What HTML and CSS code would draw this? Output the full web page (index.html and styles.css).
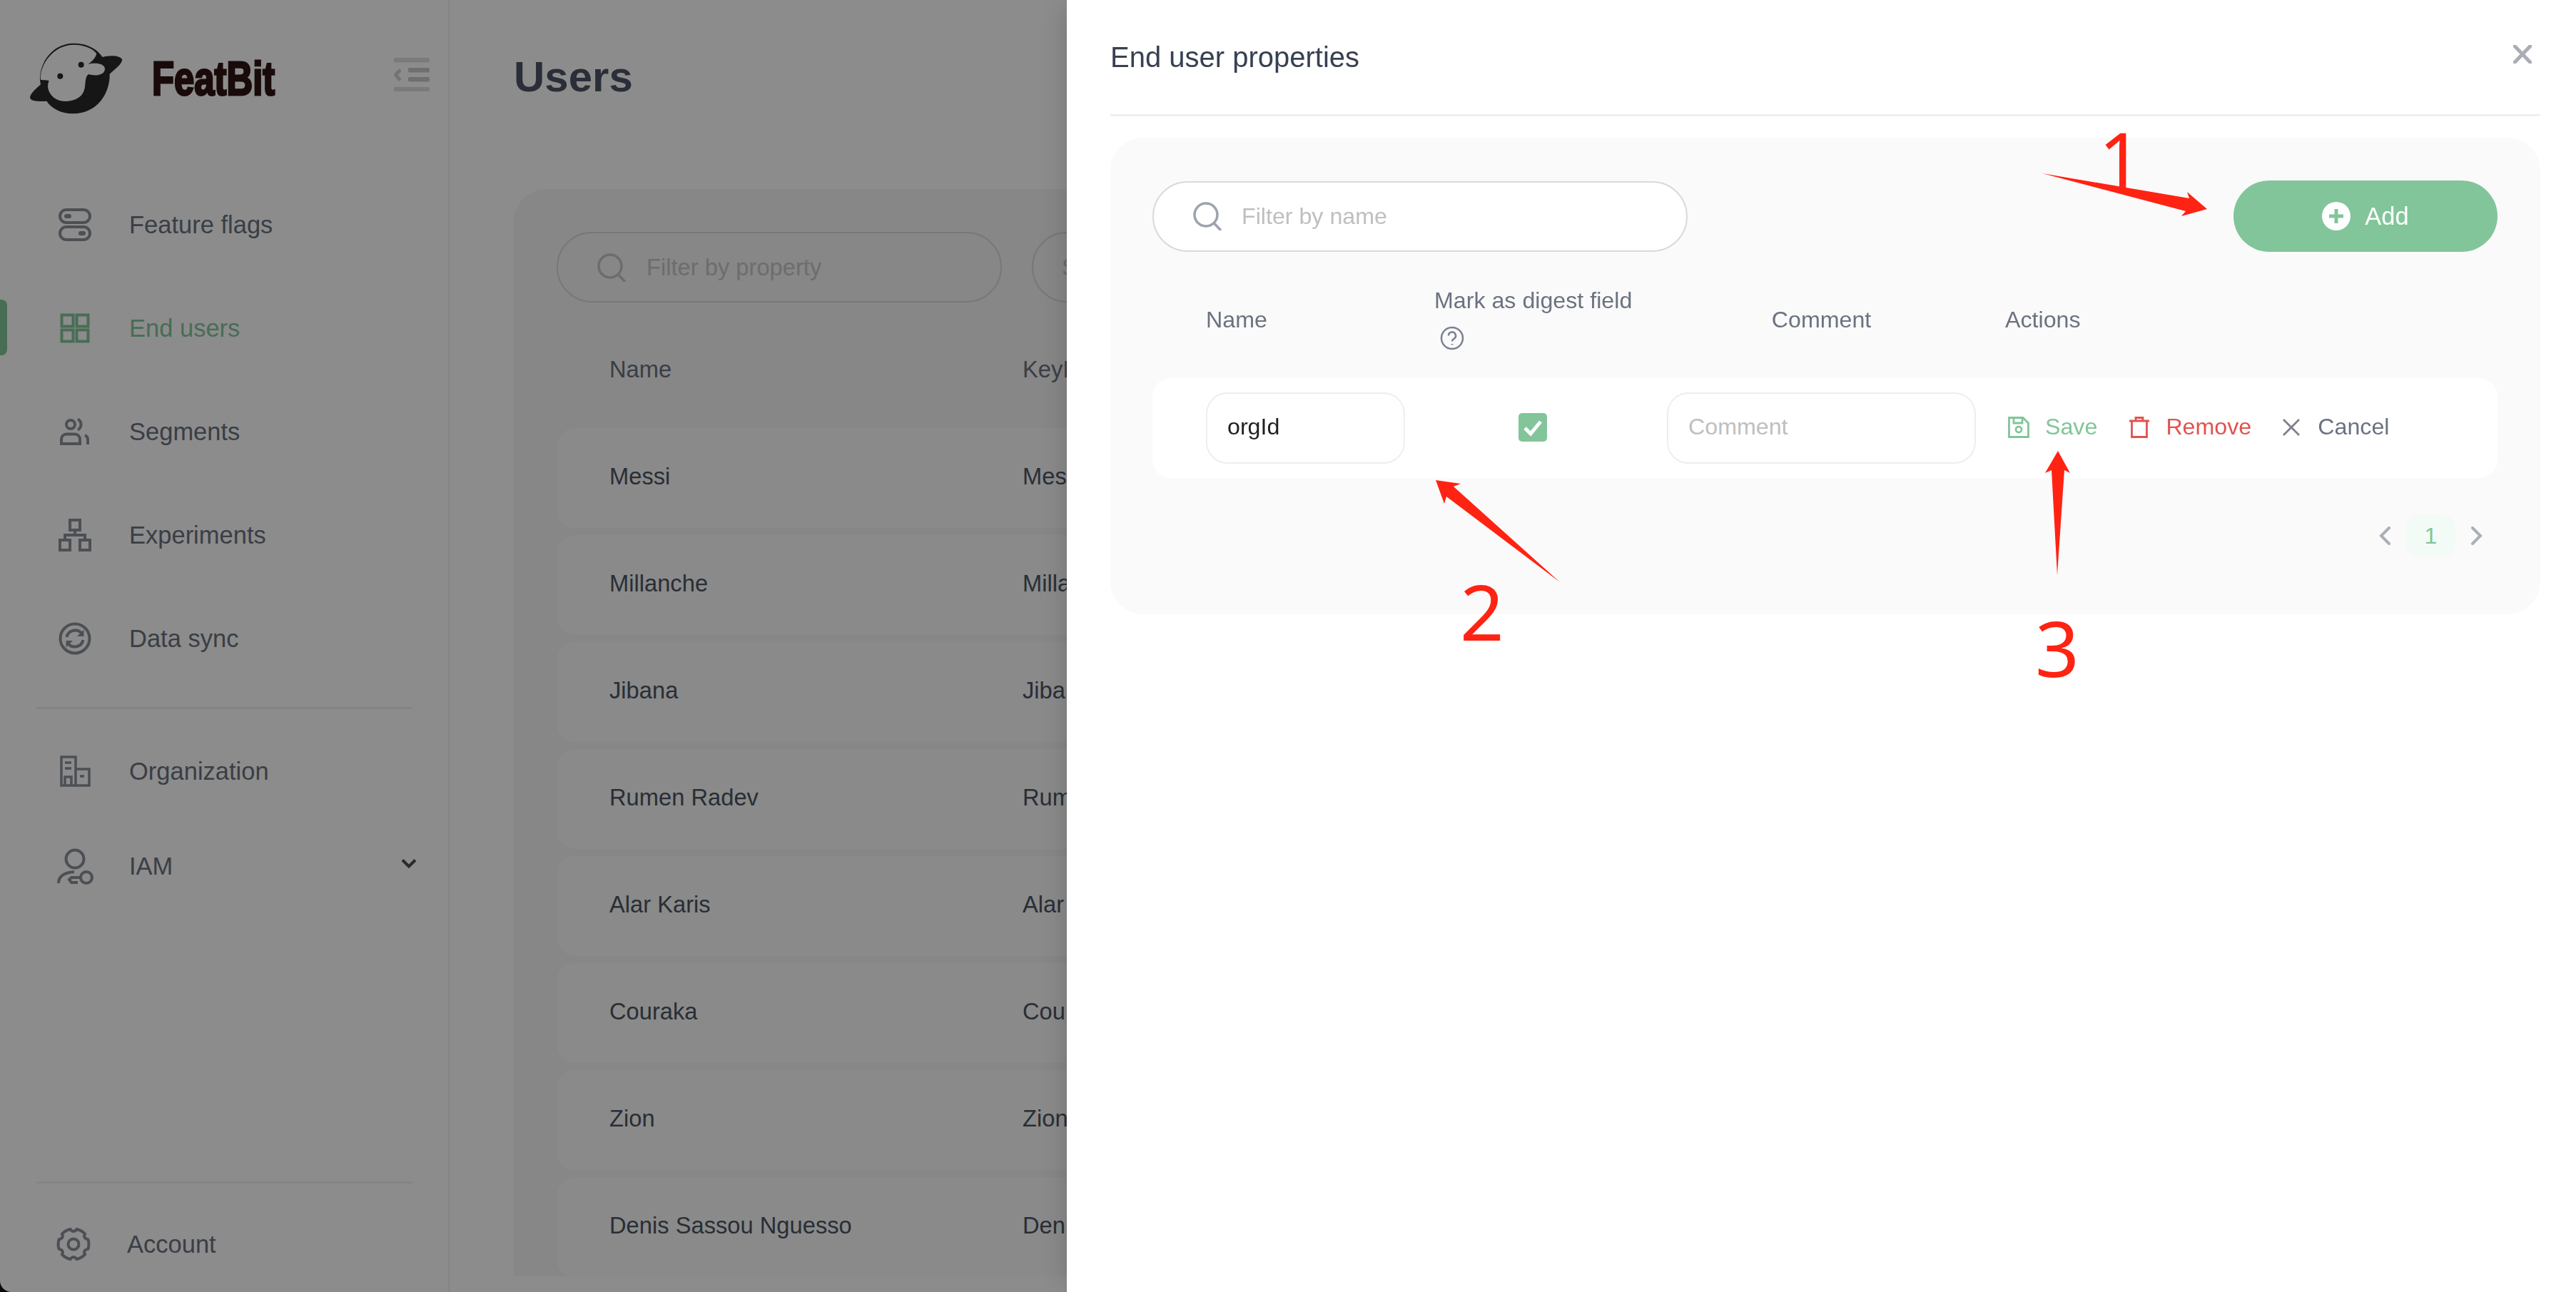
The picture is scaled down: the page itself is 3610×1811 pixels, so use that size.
FILE: index.html
```html
<!DOCTYPE html>
<html lang="en">
<head>
<meta charset="utf-8">
<title>FeatBit - End users</title>
<link rel="stylesheet" href="styles.css">
</head>
<body>
<div class="app">
  <aside class="sidebar">
    <div class="brand">
      <svg class="logo" viewBox="125 90 390 300" aria-hidden="true">
        <path class="logo-body" fill-rule="evenodd" d="M430 150C455 143 500 140 513 160C510 185 475 205 460 222C462 300 410 388 305 388C255 388 215 365 195 335C165 338 125 335 125 320C128 300 155 280 170 265C155 190 210 92 310 92C370 92 410 120 430 150ZM170 245C165 180 225 98 310 98C355 98 390 115 405 135C400 155 385 170 368 180C395 172 440 175 440 200C440 225 400 232 372 222C350 235 365 280 345 305C320 340 255 345 225 320C200 300 195 270 205 250C195 245 180 248 170 245Z"/>
        <circle class="logo-body" cx="340" cy="182" r="12"/>
        <circle class="logo-body" cx="252" cy="230" r="12"/>
      </svg>
      <span class="brand-name">FeatBit</span>
      <svg class="collapse" viewBox="0 0 50 47" aria-hidden="true">
        <rect class="collapse-outer" x="0" y="0" width="50" height="6.5" rx="2"/>
        <rect class="collapse-inner" x="20" y="14" width="30" height="6.5" rx="2"/>
        <rect class="collapse-inner" x="20" y="27" width="30" height="6.5" rx="2"/>
        <rect class="collapse-outer" x="0" y="41" width="50" height="6.5" rx="2"/>
        <path class="collapse-arrow" d="M7.500 18.500L2.500 24L7.500 30"/>
      </svg>
    </div>
    <nav class="nav">
      <a class="nav-item">
        <svg class="nav-icon" viewBox="0 0 46 46" aria-hidden="true"><rect class="ico" x="2" y="2" width="42" height="18" rx="9"/><rect class="ico" x="2" y="26" width="42" height="18" rx="9"/><rect class="ico-fill" x="8" y="8" width="10" height="6" rx="3"/><rect class="ico-fill" x="28" y="32" width="10" height="6" rx="3"/></svg>
        <span>Feature flags</span>
      </a>
      <a class="nav-item is-active">
        <svg class="nav-icon" viewBox="0 0 46 46" aria-hidden="true"><rect class="ico" x="4.500" y="4.500" width="16" height="16"/><rect class="ico" x="25.500" y="4.500" width="16" height="16"/><rect class="ico" x="4.500" y="25.500" width="16" height="16"/><rect class="ico" x="25.500" y="25.500" width="16" height="16"/></svg>
        <span>End users</span>
      </a>
      <a class="nav-item">
        <svg class="nav-icon" viewBox="0 0 46 46" aria-hidden="true"><circle class="ico" cx="17" cy="13" r="6"/><path class="ico" d="M27 5.500a8.500 8.500 0 0 1 0 15"/><path class="ico" d="M4 40V33.500a7 7 0 0 1 7-7h12a7 7 0 0 1 7 7V40Z"/><path class="ico" d="M37 28a7 7 0 0 1 4 6.500V41"/></svg>
        <span>Segments</span>
      </a>
      <a class="nav-item">
        <svg class="nav-icon" viewBox="0 0 46 46" aria-hidden="true"><rect class="ico" x="16" y="2" width="14" height="14"/><rect class="ico" x="2" y="30" width="14" height="14"/><rect class="ico" x="30" y="30" width="14" height="14"/><path class="ico" d="M23 16V23M9 30V23H37V30"/></svg>
        <span>Experiments</span>
      </a>
      <a class="nav-item">
        <svg class="nav-icon" viewBox="0 0 46 46" aria-hidden="true"><circle class="ico" cx="23" cy="23" r="20.500"/><path class="ico" d="M11.500 21A12 12 0 0 1 33 16.500M34.500 25A12 12 0 0 1 13 29.500"/><path class="ico-fill" d="M35.500 10.500V20H26ZM10.500 35.500V26H20Z"/></svg>
        <span>Data sync</span>
      </a>
      <hr class="nav-rule">
      <a class="nav-item">
        <svg class="nav-icon" viewBox="0 0 46 46" aria-hidden="true"><path class="ico ico-thin" d="M4 43V3H24V43ZM24 20H43V43H4"/><path class="ico ico-thin" d="M9 11H18M9 19H18M9 43V31H18V43M30 30H36"/></svg>
        <span>Organization</span>
      </a>
      <a class="nav-item nav-item-short">
        <svg class="nav-icon" viewBox="0 0 46 46" aria-hidden="true"><circle class="ico" cx="23" cy="14" r="12.500"/><path class="ico" d="M0 48C0 38 9 33 22 32"/><circle class="ico" cx="39" cy="40" r="8"/><path class="ico" d="M31 40H18L15 43L18 47H27"/></svg>
        <span>IAM</span>
        <svg class="nav-caret" viewBox="0 0 22 14" aria-hidden="true"><path d="M2 2.500L11 11.500L20 2.500"/></svg>
      </a>
    </nav>
    <div class="account">
      <svg class="nav-icon" viewBox="0 0 46 46" aria-hidden="true"><path class="ico" d="M18.500 2Q23 8 27.500 2A21.500 21.500 0 0 1 39 8.600Q36 14.500 43.400 16.400A21.500 21.500 0 0 1 43.400 29.600Q36 31.500 39 37.400A21.500 21.500 0 0 1 27.500 44Q23 38 18.500 44A21.500 21.500 0 0 1 7 37.400Q10 31.500 2.600 29.600A21.500 21.500 0 0 1 2.600 16.400Q10 14.500 7 8.600A21.500 21.500 0 0 1 18.500 2Z"/><circle class="ico" cx="23" cy="23" r="7.500"/></svg>
      <span>Account</span>
    </div>
  </aside>

  <main class="main">
    <h1 class="page-title">Users</h1>
    <section class="panel">
      <div class="filters">
        <div class="pill pill-wide">
          <svg class="search-icon search-dim" viewBox="0 0 40 40" aria-hidden="true"><circle cx="18" cy="18" r="16"/><path d="M29.500 30L38 39"/></svg>
          <span class="dim-placeholder">Filter by property</span>
        </div>
        <div class="pill pill-second">
          <span class="dim-placeholder">Select</span>
        </div>
      </div>
      <div class="users-head">
        <span>Name</span>
        <span>KeyId</span>
      </div>
      <div class="user-row"><span>Messi</span><span>Messi</span></div>
      <div class="user-row"><span>Millanche</span><span>Millanche</span></div>
      <div class="user-row"><span>Jibana</span><span>Jibana</span></div>
      <div class="user-row"><span>Rumen Radev</span><span>Rumen Radev</span></div>
      <div class="user-row"><span>Alar Karis</span><span>Alar Karis</span></div>
      <div class="user-row"><span>Couraka</span><span>Couraka</span></div>
      <div class="user-row"><span>Zion</span><span>Zion</span></div>
      <div class="user-row"><span>Denis Sassou Nguesso</span><span>Denis Sassou Nguesso</span></div>
    </section>
  </main>
</div>

<div class="mask"></div>

<aside class="drawer">
  <header class="drawer-head">
    <h2 class="drawer-title">End user properties</h2>
    <svg class="drawer-close" viewBox="0 0 26 26" aria-hidden="true"><path d="M2 1.500L24 24.500M24 1.500L2 24.500"/></svg>
  </header>
  <section class="card">
    <div class="card-top">
      <div class="pill pill-name">
        <svg class="search-icon" viewBox="0 0 40 40" aria-hidden="true"><circle cx="18" cy="18" r="16"/><path d="M29.500 30L38 39"/></svg>
        <span class="placeholder">Filter by name</span>
      </div>
      <button class="add-btn">
        <svg class="add-icon" viewBox="0 0 40 40" aria-hidden="true"><circle cx="20" cy="20" r="20"/><path d="M20 10V30M10 20H30"/></svg>
        <span>Add</span>
      </button>
    </div>
    <div class="prop-grid prop-head">
      <span class="col-name">Name</span>
      <div class="col-mark">
        <span>Mark as digest field</span>
        <svg class="help" viewBox="0 0 34 34" aria-hidden="true"><circle cx="17" cy="17" r="15"/><path d="M12 13.500a5 5 0 1 1 7.500 4.300c-1.700 1-2.500 1.700-2.500 3.700"/><path d="M17 25v1.500"/></svg>
      </div>
      <span class="col-comment">Comment</span>
      <span class="col-actions">Actions</span>
    </div>
    <div class="prop-grid prop-row">
      <div class="field field-name">orgId</div>
      <div class="check">
        <svg viewBox="0 0 40 40" aria-hidden="true"><rect width="40" height="40" rx="5"/><path d="M9 21L17 29L31 12"/></svg>
      </div>
      <div class="field field-comment"><span class="placeholder">Comment</span></div>
      <div class="actions">
        <a class="action action-save">
          <svg viewBox="0 0 30 30" aria-hidden="true"><path d="M1.500 1.500H21L28.500 9V28.500H1.500Z"/><path d="M8 1.500V9H20V1.500"/><circle cx="15" cy="18" r="4"/></svg>
          <span>Save</span>
        </a>
        <a class="action action-remove">
          <svg viewBox="0 0 30 30" aria-hidden="true"><path d="M1 6H29M10 6V1.500H20V6M4.500 6V28.500H25.500V6"/></svg>
          <span>Remove</span>
        </a>
        <a class="action action-cancel">
          <svg viewBox="0 0 24 24" aria-hidden="true"><path d="M1 1L23 23M23 1L1 23"/></svg>
          <span>Cancel</span>
        </a>
      </div>
    </div>
    <div class="pager">
      <svg class="pager-arrow" viewBox="0 0 16 26" aria-hidden="true"><path d="M14 2L3 13L14 24"/></svg>
      <span class="page-current">1</span>
      <svg class="pager-arrow" viewBox="0 0 16 26" aria-hidden="true"><path d="M2 2L13 13L2 24"/></svg>
    </div>
  </section>
</aside>

<svg class="marks" viewBox="0 0 3610 1811" aria-hidden="true">
  <polygon points="2862,243 3068,278 3065,269 3093,293 3057,303 3063,296"/>
  <polygon points="2012,673 2047,678 2037,682 2186,816 2027,696 2024,706"/>
  <polygon points="2884,632 2901,663 2893,659 2883,806 2875,659 2866,663"/>
</svg>
<span class="mark-num mark-1">1</span>
<span class="mark-num mark-2">2</span>
<span class="mark-num mark-3">3</span>
</body>
</html>
```

FILE: styles.css
```css
* { box-sizing: border-box; }

html, body {
  margin: 0;
  width: 3610px;
  height: 1811px;
  overflow: hidden;
  background: #111;
  font-family: "Liberation Sans", Arial, sans-serif;
}

.app {
  display: flex;
  width: 3610px;
  height: 1811px;
}

/* sidebar */
.sidebar {
  width: 630px;
  flex: none;
  display: flex;
  flex-direction: column;
  background: #fff;
  border-right: 2px solid #f0f0f0;
  border-bottom-left-radius: 16px;
  color: #6b7280;
  font-size: 34.500px;
}

.brand {
  height: 242px;
  flex: none;
  display: flex;
  align-items: center;
  padding: 0 0 22px 42px;
}

.logo { width: 130px; height: 100px; flex: none; }
.logo-body { fill: #282828; }

.brand-name {
  margin-left: 41px;
  width: 180px;
  white-space: nowrap;
  font-weight: 700;
  font-size: 66px;
  line-height: 1;
  color: #301414;
  -webkit-text-stroke: 3px #301414;
  transform: scaleX(.77);
  transform-origin: left center;
}

.collapse {
  width: 50px;
  height: 47px;
  margin: -12px 0 0 auto;
  margin-right: 26px;
}
.collapse-outer { fill: #dddfe2; }
.collapse-inner { fill: #c6cacd; }
.collapse-arrow { fill: none; stroke: #cfd2d6; stroke-width: 5; stroke-linecap: round; stroke-linejoin: round; }

.nav { display: flex; flex-direction: column; }

.nav-item {
  position: relative;
  height: 145px;
  display: flex;
  align-items: center;
  padding-left: 82px;
}

.nav-item > span { padding-top: 2px; }

.nav-item-short { height: 120px; }

.nav-icon {
  width: 46px;
  height: 46px;
  flex: none;
  margin-right: 53px;
  overflow: visible;
}

.ico {
  fill: none;
  stroke: #8b9099;
  stroke-width: 4;
}
.ico-thin { stroke-width: 3.500; }
.ico-fill { fill: #8b9099; }

.is-active { color: #84c69b; }
.is-active .ico { stroke: #84c69b; }
.is-active::before {
  content: "";
  position: absolute;
  left: 0;
  top: 33px;
  width: 10px;
  height: 78px;
  background: #84c69b;
  border-radius: 0 8px 8px 0;
}

.nav-rule {
  width: 527px;
  height: 3px;
  margin: 24px 0 14px 51px;
  border: 0;
  background: #eef0f3;
}

.nav-caret {
  width: 22px;
  height: 14px;
  margin-left: auto;
  margin-right: 44px;
  margin-top: -6px;
  fill: none;
  stroke: #4b4f58;
  stroke-width: 4;
}

.account {
  margin: auto 0 0 51px;
  width: 527px;
  height: 155px;
  display: flex;
  align-items: center;
  padding: 18px 0 0 29px;
  border-top: 3px solid #eef0f3;
}
.account .nav-icon { margin-right: 52px; }

/* main */
.main {
  flex: 1;
  min-width: 0;
  overflow: hidden;
  background: #fff;
  padding-left: 90px;
}

.page-title {
  height: 265px;
  margin: 0;
  padding-top: 73px;
  font-size: 60px;
  line-height: 70px;
  font-weight: 700;
  color: #4e5566;
}

.panel {
  height: 1524px;
  padding: 60px 0 0 60px;
  background: #f6f6f6;
  border-top-left-radius: 46px;
  overflow: hidden;
  font-size: 32.700px;
}

.filters { display: flex; gap: 42px; }

.pill {
  display: flex;
  align-items: center;
  height: 99px;
  border: 2px solid #d9d9d9;
  border-radius: 50px;
  background: transparent;
}

.pill-wide { width: 624px; padding-left: 55px; }
.pill-second { width: 500px; padding-left: 40px; }

.search-icon {
  width: 40px;
  height: 40px;
  flex: none;
  fill: none;
  stroke: #9ca3af;
  stroke-width: 3.500;
  stroke-linecap: round;
}
.search-dim { stroke: #c1c6cc; margin-right: 29px; }
.dim-placeholder { color: #c6c6c6; }

.users-head {
  display: grid;
  grid-template-columns: 579px 1fr;
  align-items: center;
  height: 176px;
  padding: 12px 0 0 74px;
  color: #6b7280;
}

.user-row {
  display: grid;
  grid-template-columns: 579px 1fr;
  align-items: center;
  height: 140px;
  margin-bottom: 10px;
  padding: 0 0 4px 74px;
  background: #fbfbfb;
  border-radius: 26px;
  color: #4b5563;
}

/* mask + drawer */
.mask {
  position: fixed;
  inset: 0;
  background: rgba(0, 0, 0, .45);
}

.drawer {
  position: fixed;
  top: 0;
  right: 0;
  bottom: 0;
  width: 2115px;
  padding: 0 50px 0 61px;
  background: #fff;
  box-shadow: -6px 0 40px -4px rgba(0, 0, 0, .16);
  font-size: 32.200px;
  color: #6b7280;
}

.drawer-head {
  height: 163px;
  display: flex;
  align-items: flex-start;
  justify-content: space-between;
  padding: 57px 12px 0 0;
  border-bottom: 3px solid #f0f0f0;
}

.drawer-title {
  margin: 0;
  font-size: 40px;
  line-height: 46px;
  font-weight: 400;
  color: #374151;
}

.drawer-close {
  width: 26px;
  height: 26px;
  margin-top: 6px;
  fill: none;
  stroke: #a9adb5;
  stroke-width: 5;
  stroke-linecap: round;
}

.card {
  height: 668px;
  margin-top: 30px;
  padding: 60px 60px 0 59px;
  background: #fafafa;
  border-radius: 46px;
}

.card-top {
  display: flex;
  justify-content: space-between;
  align-items: center;
  height: 100px;
}

.pill-name {
  width: 750px;
  padding-left: 55px;
  gap: 28px;
  background: #fff;
}

.placeholder { color: #bfbfbf; }

.add-btn {
  width: 370px;
  height: 100px;
  display: flex;
  align-items: center;
  justify-content: center;
  gap: 20px;
  padding: 0;
  border: 0;
  border-radius: 50px;
  background: #82c59a;
  color: #fff;
  font-family: inherit;
  font-size: 34.500px;
}

.add-icon { width: 40px; height: 40px; }
.add-icon circle { fill: #fff; }
.add-icon path { fill: none; stroke: #82c59a; stroke-width: 5; }

.prop-grid {
  display: grid;
  grid-template-columns: 320px 326px 474px 1fr;
  align-items: center;
  padding-left: 75px;
}

.prop-head { height: 177px; padding-top: 14px; }

.col-mark {
  display: flex;
  flex-direction: column;
  align-items: flex-start;
  gap: 17px;
  margin-top: -4px;
}

.help {
  width: 34px;
  height: 34px;
  margin-left: 8px;
  fill: none;
  stroke: #7b8290;
  stroke-width: 2.500;
}

.col-comment { width: 433px; text-align: center; }

.prop-row {
  height: 140px;
  background: #fff;
  border-radius: 26px;
}

.field {
  height: 100px;
  display: flex;
  align-items: center;
  padding-bottom: 3px;
  border: 2px solid #eeeeee;
  border-radius: 30px;
  background: #fff;
}

.field-name {
  width: 279px;
  padding-left: 28px;
  color: #1f1f1f;
}

.field-comment {
  width: 433px;
  padding-left: 28px;
}

.check { padding: 0 0 2px 118px; line-height: 0; }
.check svg { width: 40px; height: 40px; }
.check rect { fill: #82c59a; }
.check path { fill: none; stroke: #fff; stroke-width: 5; }

.actions {
  display: flex;
  align-items: center;
  gap: 44px;
  padding: 0 0 3px 4px;
}

.action { display: flex; align-items: center; gap: 22px; }
.action svg { width: 30px; height: 30px; fill: none; stroke-width: 2.800; }
.action-save { color: #82c59a; }
.action-save svg { stroke: #82c59a; }
.action-remove { color: #e0534f; }
.action-remove svg { stroke: #e0534f; }
.action-cancel { gap: 25px; color: #6b7280; }
.action-cancel svg { width: 24px; height: 24px; stroke: #7d8088; }

.pager {
  display: flex;
  align-items: center;
  justify-content: flex-end;
  gap: 22px;
  margin-top: 51px;
  padding-right: 21px;
}

.pager-arrow {
  width: 16px;
  height: 26px;
  fill: none;
  stroke: #abafb7;
  stroke-width: 4;
  stroke-linecap: round;
}

.page-current {
  width: 69px;
  height: 60px;
  display: flex;
  align-items: center;
  justify-content: center;
  border-radius: 18px;
  background: #f2fbf6;
  color: #82c59a;
}

/* red annotations */
.marks {
  position: fixed;
  inset: 0;
  width: 3610px;
  height: 1811px;
  fill: #ff2313;
  pointer-events: none;
}

.mark-num {
  position: fixed;
  font-family: "Noto Sans", sans-serif;
  font-size: 108px;
  line-height: 108px;
  color: #ff2313;
}
.mark-1 { left: 2941px; top: 169px; }
.mark-2 { left: 2046px; top: 803px; }
.mark-3 { left: 2852px; top: 854px; }
```
